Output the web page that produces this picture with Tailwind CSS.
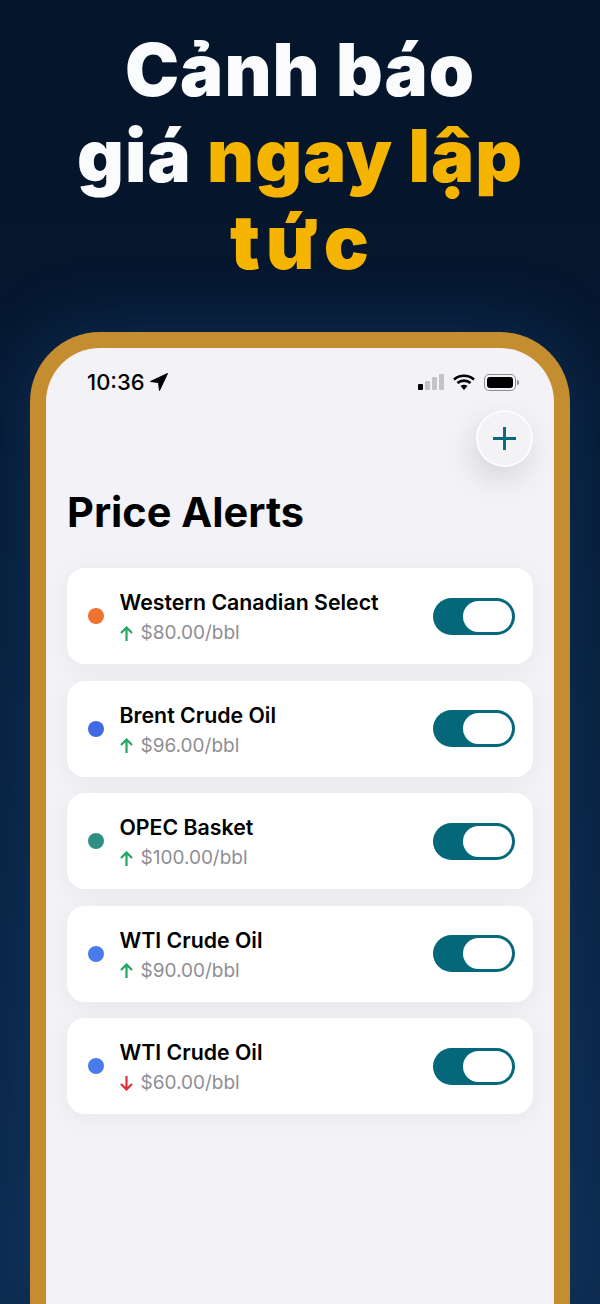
<!DOCTYPE html>
<html lang="vi">
<head>
    <meta charset="UTF-8">
    <title>Price Alerts</title>
    <script src="https://cdn.jsdelivr.net/npm/@tailwindcss/browser@4"></script>
</head>
<body class="relative w-[600px] h-[1304px] overflow-hidden bg-gradient-to-b from-[#05162c] from-15% to-[#0d2b4e] font-['Inter',sans-serif]">
    <h1 class="pt-[27px] h-[332px] text-center font-black text-[72.500px] tracking-[1px] leading-[86px] text-[#fafbfc]">
        Cảnh báo<br>giá <span class="text-[#f5b400]">ngay lập</span><br><span class="pl-[5px] tracking-[6px] text-[75px] text-[#f5b400]">tức</span>
    </h1>

    <div class="mx-[30px] h-[972px] border-[16px] border-b-0 border-[#c48d30] rounded-t-[70px] bg-[#f2f2f7] shadow-[0_0_70px_rgba(20,70,130,0.45)]">
        <!-- status bar -->
        <div class="flex justify-between items-center pl-[41px] pr-[35px] pt-[20px] h-[48px]">
            <div class="flex items-center gap-[5px] font-medium text-[22px] text-black">
                10:36
                <svg class="w-[18px] h-[18px]" viewBox="0 0 18 18"><path d="M17.500.5.500 8.500l8 1 1 8z" fill="#000" stroke="#000" stroke-linejoin="round"/></svg>
            </div>
            <div class="flex items-center gap-[9px]">
                <div class="flex items-end gap-[2px]">
                    <div class="w-[5px] h-[6px] rounded-[1px] bg-black"></div>
                    <div class="w-[5px] h-[9px] rounded-[1px] bg-[#c4c4c8]"></div>
                    <div class="w-[5px] h-[13px] rounded-[1px] bg-[#c4c4c8]"></div>
                    <div class="w-[5px] h-[16px] rounded-[1px] bg-[#c4c4c8]"></div>
                </div>
                <svg class="w-[22px] h-[16px]" viewBox="0 0 22 16" fill="none" stroke="#000" stroke-width="2.600">
                    <path d="M1 5.500c5.600-5 14.400-5 20 0"/>
                    <path d="M4.500 9c3.700-3.200 9.300-3.200 13 0"/>
                    <path d="M11 16l-3.500-4c2-1.600 5-1.600 7 0z" fill="#000" stroke="none"/>
                </svg>
                <div class="flex items-center gap-[1px]">
                    <div class="p-[2px] w-[32px] h-[17px] border border-[#8e8e93] rounded-[5px]">
                        <div class="w-full h-full rounded-[3px] bg-black"></div>
                    </div>
                    <div class="w-[2px] h-[5px] rounded-r-sm bg-[#8e8e93]"></div>
                </div>
            </div>
        </div>

        <!-- add button -->
        <div class="flex justify-end mt-[14px] pr-[21px]">
            <button class="flex justify-center items-center w-[57px] h-[57px] border-2 border-white/80 rounded-full bg-[#f3f3f5] shadow-[-4px_12px_30px_rgba(0,0,0,0.12)]">
                <svg class="w-[23px] h-[23px]" viewBox="0 0 24 24" stroke="#05687a" stroke-width="3"><path d="M12 0v24M0 12h24"/></svg>
            </button>
        </div>

        <div class="px-[21px]">
            <h2 class="mt-[20px] mb-[31px] font-bold text-[41.500px] leading-[50px] text-black">Price Alerts</h2>

            <div class="flex flex-col gap-[16.500px]">
                <div class="flex items-center pl-[21px] pr-[18px] h-[96px] rounded-[18px] bg-white shadow-[0_4px_24px_rgba(0,0,0,0.05)]">
                    <div class="w-[16px] h-[16px] rounded-full bg-[#f07232]"></div>
                    <div class="flex-1 ml-[15.500px] mt-[2px]">
                        <div class="font-semibold text-[21.300px] leading-[30px] text-black">Western Canadian Select</div>
                        <div class="flex items-center gap-[8px] mt-[2px] text-[19px] leading-[28px] text-[#8e8e93]">
                            <svg class="w-[13px] h-[15px]" viewBox="0 0 13 15" fill="none" stroke="#22a565" stroke-width="2.200"><path d="M6.500 15V1.500M1 7l5.500-5.500L12 7"/></svg>
                            $80.00/bbl
                        </div>
                    </div>
                    <div class="flex justify-end items-center p-[3px] w-[82px] h-[37px] rounded-full bg-[#05687a]">
                        <div class="w-[49px] h-[31px] rounded-full bg-white"></div>
                    </div>
                </div>

                <div class="flex items-center pl-[21px] pr-[18px] h-[96px] rounded-[18px] bg-white shadow-[0_4px_24px_rgba(0,0,0,0.05)]">
                    <div class="w-[16px] h-[16px] rounded-full bg-[#4169e1]"></div>
                    <div class="flex-1 ml-[15.500px] mt-[2px]">
                        <div class="font-semibold text-[21.300px] leading-[30px] text-black">Brent Crude Oil</div>
                        <div class="flex items-center gap-[8px] mt-[2px] text-[19px] leading-[28px] text-[#8e8e93]">
                            <svg class="w-[13px] h-[15px]" viewBox="0 0 13 15" fill="none" stroke="#22a565" stroke-width="2.200"><path d="M6.500 15V1.500M1 7l5.500-5.500L12 7"/></svg>
                            $96.00/bbl
                        </div>
                    </div>
                    <div class="flex justify-end items-center p-[3px] w-[82px] h-[37px] rounded-full bg-[#05687a]">
                        <div class="w-[49px] h-[31px] rounded-full bg-white"></div>
                    </div>
                </div>

                <div class="flex items-center pl-[21px] pr-[18px] h-[96px] rounded-[18px] bg-white shadow-[0_4px_24px_rgba(0,0,0,0.05)]">
                    <div class="w-[16px] h-[16px] rounded-full bg-[#2f8f83]"></div>
                    <div class="flex-1 ml-[15.500px] mt-[2px]">
                        <div class="font-semibold text-[21.300px] leading-[30px] text-black">OPEC Basket</div>
                        <div class="flex items-center gap-[8px] mt-[2px] text-[19px] leading-[28px] text-[#8e8e93]">
                            <svg class="w-[13px] h-[15px]" viewBox="0 0 13 15" fill="none" stroke="#22a565" stroke-width="2.200"><path d="M6.500 15V1.500M1 7l5.500-5.500L12 7"/></svg>
                            $100.00/bbl
                        </div>
                    </div>
                    <div class="flex justify-end items-center p-[3px] w-[82px] h-[37px] rounded-full bg-[#05687a]">
                        <div class="w-[49px] h-[31px] rounded-full bg-white"></div>
                    </div>
                </div>

                <div class="flex items-center pl-[21px] pr-[18px] h-[96px] rounded-[18px] bg-white shadow-[0_4px_24px_rgba(0,0,0,0.05)]">
                    <div class="w-[16px] h-[16px] rounded-full bg-[#4a7bec]"></div>
                    <div class="flex-1 ml-[15.500px] mt-[2px]">
                        <div class="font-semibold text-[21.300px] leading-[30px] text-black">WTI Crude Oil</div>
                        <div class="flex items-center gap-[8px] mt-[2px] text-[19px] leading-[28px] text-[#8e8e93]">
                            <svg class="w-[13px] h-[15px]" viewBox="0 0 13 15" fill="none" stroke="#22a565" stroke-width="2.200"><path d="M6.500 15V1.500M1 7l5.500-5.500L12 7"/></svg>
                            $90.00/bbl
                        </div>
                    </div>
                    <div class="flex justify-end items-center p-[3px] w-[82px] h-[37px] rounded-full bg-[#05687a]">
                        <div class="w-[49px] h-[31px] rounded-full bg-white"></div>
                    </div>
                </div>

                <div class="flex items-center pl-[21px] pr-[18px] h-[96px] rounded-[18px] bg-white shadow-[0_4px_24px_rgba(0,0,0,0.05)]">
                    <div class="w-[16px] h-[16px] rounded-full bg-[#4a7bec]"></div>
                    <div class="flex-1 ml-[15.500px] mt-[2px]">
                        <div class="font-semibold text-[21.300px] leading-[30px] text-black">WTI Crude Oil</div>
                        <div class="flex items-center gap-[8px] mt-[2px] text-[19px] leading-[28px] text-[#8e8e93]">
                            <svg class="w-[13px] h-[15px]" viewBox="0 0 13 15" fill="none" stroke="#dc2f36" stroke-width="2.200"><path d="M6.500 0v13.500M1 8l5.500 5.500L12 8"/></svg>
                            $60.00/bbl
                        </div>
                    </div>
                    <div class="flex justify-end items-center p-[3px] w-[82px] h-[37px] rounded-full bg-[#05687a]">
                        <div class="w-[49px] h-[31px] rounded-full bg-white"></div>
                    </div>
                </div>
            </div>
        </div>
    </div>
</body>
</html>
